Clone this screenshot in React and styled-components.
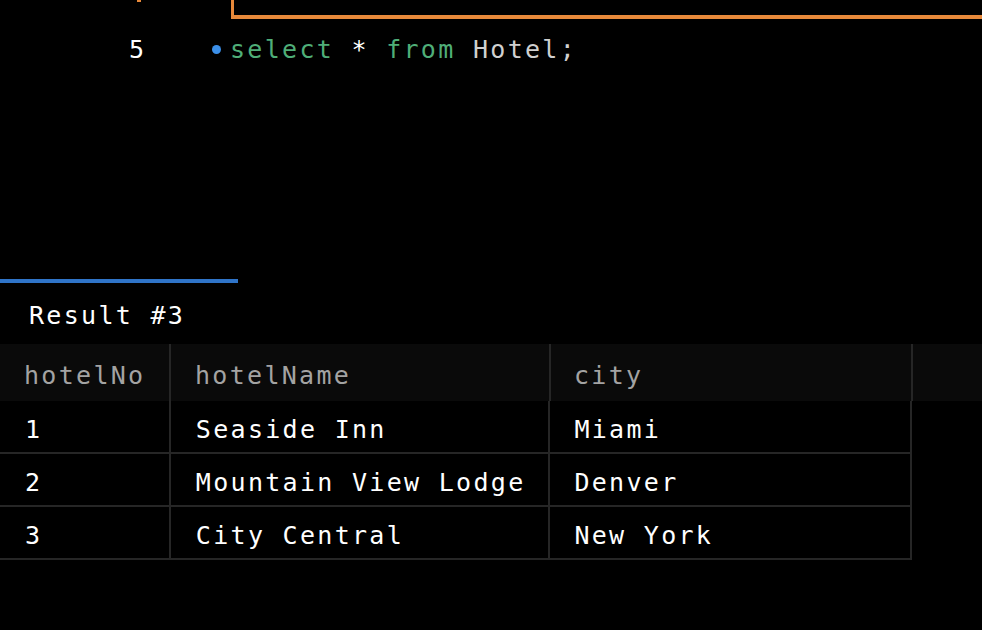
import styled, { createGlobalStyle } from "styled-components";

const GlobalStyle = createGlobalStyle`
  html, body {
    margin: 0;
    padding: 0;
    background: #000;
    overflow: hidden;
  }
  body {
    font-family: "DejaVu Sans Mono", "Liberation Mono", monospace;
  }
`;

const mono = `
  font-family: "DejaVu Sans Mono", "Liberation Mono", monospace;
  font-size: 25px;
  letter-spacing: 2.3px;
`;

const Page = styled.div`
  width: 982px;
  height: 630px;
  background: #000;
  display: flex;
  flex-direction: column;
  overflow: hidden;
`;

const Editor = styled.div`
  height: 279px;
  display: flex;
  flex-direction: column;
`;

const PrevLine = styled.div`
  display: flex;
  height: 19px;
`;

const PrevMark = styled.span`
  width: 4px;
  height: 2px;
  margin-left: 137px;
  background: #e8893a;
`;

const PrevBox = styled.div`
  margin-left: 90px;
  flex: 1;
  border-left: 3px solid #e8893a;
  border-bottom: 4px solid #e8893a;
`;

const CodeLine = styled.div`
  display: flex;
  align-items: center;
  height: 61px;
  ${mono}
`;

const LineNo = styled.span`
  width: 144px;
  text-align: right;
  color: #fff;
  letter-spacing: 0;
`;

const Dot = styled.span`
  width: 9px;
  height: 9px;
  border-radius: 50%;
  background: #3b8fe8;
  margin-left: 68px;
  margin-right: 9px;
`;

const Tok = styled.span`
  color: ${(p) => p.$color};
  white-space: pre;
`;

const TabBar = styled.div`
  height: 4px;
  width: 238px;
  background: #2f74c8;
`;

const ResultLabel = styled.div`
  height: 61px;
  box-sizing: border-box;
  padding-top: 3px;
  display: flex;
  align-items: center;
  padding-left: 29px;
  color: #fff;
  ${mono}
`;

const Table = styled.div`
  display: flex;
  flex-direction: column;
`;

const HeadRow = styled.div`
  display: flex;
  height: 57px;
  background: #0a0a0a;
`;

const BodyRow = styled.div`
  display: flex;
  box-sizing: border-box;
  width: 912px;
  height: 53px;
  border-bottom: 2px solid #262626;
`;

const Cell = styled.div`
  width: ${(p) => p.$w}px;
  box-sizing: border-box;
  display: flex;
  align-items: center;
  padding-top: 6px;
  padding-left: ${(p) => p.$pad}px;
  border-right: 2px solid #262626;
  color: ${(p) => (p.$head ? "#a3a3a3" : "#fff")};
  white-space: pre;
  ${mono}
`;

const cols = [
  { key: "hotelNo", w: 171, pad: 24 },
  { key: "hotelName", w: 380, pad: 24 },
  { key: "city", w: 362, pad: 23 },
];

const rows = [
  ["1", "Seaside Inn", "Miami"],
  ["2", "Mountain View Lodge", "Denver"],
  ["3", "City Central", "New York"],
];

export default function App() {
  return (
    <>
      <GlobalStyle />
      <Page>
        <Editor>
          <PrevLine>
            <PrevMark />
            <PrevBox />
          </PrevLine>
          <CodeLine>
            <LineNo>5</LineNo>
            <Dot />
            <Tok $color="#4fae78">select</Tok>
            <Tok $color="#ffffff"> * </Tok>
            <Tok $color="#4fae78">from</Tok>
            <Tok $color="#d0d0d0"> Hotel;</Tok>
          </CodeLine>
        </Editor>
        <TabBar />
        <ResultLabel>Result #3</ResultLabel>
        <Table>
          <HeadRow>
            {cols.map((c) => (
              <Cell key={c.key} $w={c.w} $pad={c.pad} $head>
                {c.key}
              </Cell>
            ))}
          </HeadRow>
          {rows.map((r) => (
            <BodyRow key={r[0]}>
              {r.map((v, i) => (
                <Cell key={i} $w={cols[i].w} $pad={cols[i].pad + 1}>
                  {v}
                </Cell>
              ))}
            </BodyRow>
          ))}
        </Table>
      </Page>
    </>
  );
}
